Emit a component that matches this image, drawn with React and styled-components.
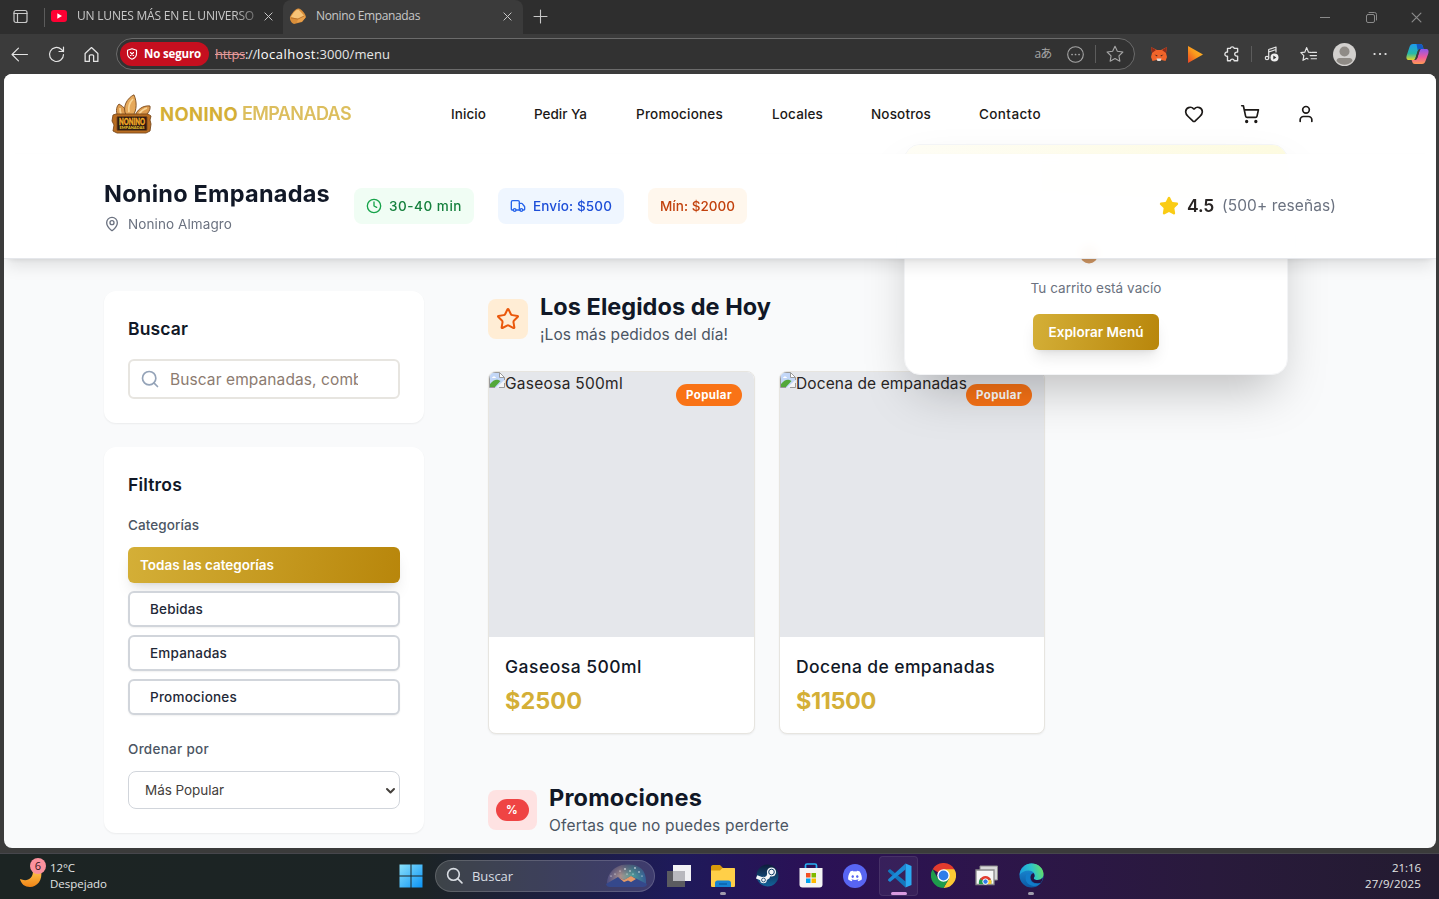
import React, { useLayoutEffect, useRef, useState } from "react";
import styled, { createGlobalStyle, css } from "styled-components";
import { Clock, Heart, MapPin, Search, ShoppingCart, Star, Truck, User } from "lucide-react";
import { FaDiscord } from "react-icons/fa6";

const uiFont = `Inter, "Liberation Sans", sans-serif`;
const systemFont = `"Open Sans", "Noto Sans", "Noto Sans CJK JP", sans-serif`;

const GlobalStyle = createGlobalStyle`
  *, *::before, *::after { box-sizing: border-box; }
  body { margin: 0; background: #3b3b3b; font-family: ${uiFont}; color: #292524; overflow: hidden; }
  h1, h2, h3, p { margin: 0; }
  button, input, select { font-family: inherit; margin: 0; }
`;

const FitSpan = styled.span`
  display: inline-block;
  white-space: nowrap;
  flex: none;
`;

/* Tracks a label so that it takes the given width in any installed font. */
function Fit({ w, children }) {
  const ref = useRef(null);
  const [spacing, setSpacing] = useState(0);
  useLayoutEffect(() => {
    const natural = ref.current.getBoundingClientRect().width;
    setSpacing((w - natural) / String(children).length);
  }, [w, children]);
  return (
    <FitSpan ref={ref} style={{ letterSpacing: `${spacing}px` }}>
      {children}
    </FitSpan>
  );
}

/* ---------- Browser window ---------- */

const Desktop = styled.div`
  width: 1439px;
  height: 899px;
  display: flex;
  flex-direction: column;
  background: #3b3b3b;
  overflow: hidden;
`;

const TabStrip = styled.div`
  height: 34px;
  flex: none;
  display: flex;
  background: #2e2e2e;
  color: #c8c8c8;
  font: 12px/32px ${systemFont};
`;

const Slot = styled.div`
  width: ${(p) => p.$w}px;
  height: ${(p) => p.$h || 32}px;
  flex: none;
  display: flex;
  align-items: center;
  justify-content: center;
  color: ${(p) => p.$color || "inherit"};
`;

const Spacer = styled.div`
  flex: 1;
`;

const Divider = styled.i`
  width: 1px;
  height: ${(p) => p.$h || 19}px;
  flex: none;
  align-self: center;
  background: #5c5c5c;
`;

const Tab = styled.div`
  width: ${(p) => p.$w}px;
  height: 34px;
  flex: none;
  display: flex;
  align-items: center;
  padding: 0 7px 2px 6px;
  ${(p) => p.$active && css`background: #3b3b3b; border-radius: 8px 8px 0 0;`}
`;

const TabTitle = styled.div`
  flex: 1;
  margin-left: ${(p) => (p.$fade ? 10 : 9)}px;
  overflow: hidden;
  ${(p) => p.$fade && css`mask-image: linear-gradient(90deg, #000 86%, rgba(0, 0, 0, 0.25));`}
`;

const Toolbar = styled.div`
  height: 40px;
  flex: none;
  display: flex;
  align-items: center;
  color: #e4e4e4;
`;

const AddressBar = styled.div`
  width: 1019px;
  height: 32px;
  margin-left: 6px;
  flex: none;
  display: flex;
  align-items: center;
  padding-left: 3px;
  border: 1px solid #6b6b6b;
  border-radius: 16px;
  background: #323232;
  color: #a6a6a6;
  font: 13px/30px ${systemFont};
`;

const UnsafeChip = styled.div`
  width: 89px;
  height: 24px;
  display: flex;
  align-items: center;
  gap: 6px;
  padding-left: 6px;
  border-radius: 12px;
  background: #c50f1f;
  color: #fff;
  font: 700 11.5px/24px ${systemFont};
`;

const Url = styled.div`
  display: flex;
  margin-left: 6px;
  color: #e6e6e6;
  s, s span { color: #e59a9a; text-decoration: line-through; }
  b { font-weight: 400; color: #fff; }
`;

const Translate = styled.div`
  font-size: 12px;
`;

const Page = styled.div`
  position: relative;
  width: 1432px;
  height: 774px;
  margin-left: 4px;
  flex: none;
  overflow: hidden;
  border-radius: 8px;
  background: #f9fafb;
`;

/* ---------- Site header ---------- */

const SiteHeader = styled.header`
  height: 80px;
  display: flex;
  align-items: center;
  padding: 0 120px 0 108px;
  background: #fff;
`;

const Brand = styled.div`
  width: 339px;
  display: flex;
  align-items: center;
  gap: 8px;
  flex: none;
`;

const BrandName = styled.div`
  display: flex;
  gap: 4px;
  font-size: 18.5px;
  line-height: 28px;
  color: #d4af37;
  b { font-weight: 700; }
`;

const BrandSuffix = styled.span`
  font-size: 18px;
  font-weight: 600;
  opacity: 0.8;
`;

const Nav = styled.nav`
  display: flex;
  gap: 48px;
  font-size: 13.5px;
  font-weight: 450;
  line-height: 20px;
  color: #1c1917;
`;

const HeaderActions = styled.div`
  display: flex;
  gap: 36px;
  margin-left: auto;
  color: #1c1917;
`;

/* ---------- Store banner ---------- */

const Banner = styled.section`
  position: relative;
  z-index: 2;
  height: 105px;
  display: flex;
  align-items: center;
  padding: 0 100px;
  border-bottom: 1px solid #e5e7eb;
  background: rgba(255, 255, 255, 0.95);
  backdrop-filter: blur(6px);
  box-shadow: 0 10px 15px -3px rgba(0, 0, 0, 0.1), 0 4px 6px -4px rgba(0, 0, 0, 0.1);
`;

const StoreInfo = styled.div`
  width: 250px;
  display: flex;
  flex-direction: column;
  gap: 4px;
`;

const Title = styled.h2`
  font-size: 23.5px;
  font-weight: 650;
  line-height: 32px;
  color: #111827;
`;

const Place = styled.p`
  display: flex;
  align-items: center;
  gap: 8px;
  font-size: 13.5px;
  line-height: 20px;
  color: #6b7280;
`;

const Pills = styled.div`
  display: flex;
  gap: 24px;
`;

const pillTones = {
  green: ["#f0fdf4", "#15803d", "#16a34a"],
  blue: ["#eff6ff", "#1d4ed8", "#2563eb"],
  orange: ["#fff7ed", "#c2410c", "#c2410c"],
};

const Pill = styled.div`
  height: 36px;
  display: flex;
  align-items: center;
  gap: 7px;
  padding: 0 12px;
  border-radius: 8px;
  background: ${(p) => pillTones[p.$tone][0]};
  color: ${(p) => pillTones[p.$tone][1]};
  font-size: 13.5px;
  font-weight: 450;
  svg { color: ${(p) => pillTones[p.$tone][2]}; }
`;

const Rating = styled.div`
  display: flex;
  align-items: center;
  gap: 8px;
  margin-left: auto;
  color: #6b7280;
  font-size: 15.5px;
  line-height: 24px;
  padding-bottom: 1px;
  b { font-size: 17.5px; font-weight: 600; color: #292524; }
`;

/* ---------- Cart drop-down ---------- */

const CartMenu = styled.aside`
  position: absolute;
  z-index: 1;
  left: 900px;
  top: 70px;
  width: 384px;
  height: 231px;
  display: flex;
  flex-direction: column;
  align-items: center;
  border: 1px solid #f3f4f6;
  border-radius: 16px;
  background: #fff;
  box-shadow: 0 25px 50px -12px rgba(0, 0, 0, 0.25);
  overflow: hidden;
`;

const CartHead = styled.div`
  width: 100%;
  height: 56px;
  background: linear-gradient(90deg, #fefdf5, #fdfbe0);
`;

const CartPicture = styled.svg`
  margin: 36px 15px 14px 0;
  flex: none;
`;

const CartText = styled.p`
  margin-bottom: 16px;
  font-size: 13.5px;
  line-height: 20px;
  color: #6b7280;
`;

const gold = css`
  border: 0;
  border-radius: 6px;
  background: linear-gradient(100deg, #d4af37, #b8860b);
  color: #fff;
  font-weight: 600;
  font-size: 13.5px;
  box-shadow: 0 10px 15px -3px rgba(0, 0, 0, 0.1), 0 4px 6px -4px rgba(0, 0, 0, 0.1);
`;

const GoldButton = styled.button`
  ${gold}
  width: 126px;
  height: 36px;
  padding: 0;
`;

/* ---------- Main area ---------- */

const Main = styled.main`
  display: flex;
  gap: 64px;
  padding: 32px 100px 0;
`;

const Sidebar = styled.aside`
  width: 320px;
  flex: none;
  display: flex;
  flex-direction: column;
  gap: 24px;
`;

const Panel = styled.section`
  padding: 24px;
  border-radius: 12px;
  background: #fff;
  box-shadow: 0 1px 2px rgba(0, 0, 0, 0.06);
`;

const PanelTitle = styled.h3`
  margin-bottom: 16px;
  font-size: 17.5px;
  font-weight: 600;
  line-height: 28px;
  color: #111827;
`;

const SearchField = styled.div`
  height: 40px;
  display: flex;
  align-items: center;
  gap: 10px;
  padding: 0 40px 0 10px;
  border: 2px solid #e7e5e0;
  border-radius: 6px;
  color: #94a3b8;
`;

const SearchText = styled.div`
  width: 188px;
  height: 26px;
  overflow: hidden;
  font-size: 15.5px;
  line-height: 27px;
  color: #8c7b70;
`;

const FieldLabel = styled.div`
  margin-bottom: 12px;
  font-size: 13.5px;
  font-weight: 450;
  line-height: 20px;
  color: #4b5563;
`;

const Options = styled.div`
  display: flex;
  flex-direction: column;
  gap: 8px;
  margin-bottom: 24px;
`;

const Option = styled.button`
  height: 36px;
  padding: 0 20px;
  border: 2px solid #d1d5db;
  border-radius: 6px;
  background: #fff;
  color: #1f2937;
  font-size: 13.5px;
  font-weight: 450;
  text-align: left;
  box-shadow: 0 1px 2px rgba(0, 0, 0, 0.06);
  ${(p) => p.$active && css`${gold} padding: 0 12px;`}
`;

const SelectBox = styled.div`
  height: 38px;
  display: flex;
  align-items: center;
  justify-content: space-between;
  padding: 0 3px 0 16px;
  border: 1px solid #d1d5db;
  border-radius: 8px;
  font-size: 13.5px;
  color: #44403c;
`;

const Content = styled.div`
  flex: 1;
`;

const SectionHead = styled.div`
  display: flex;
  align-items: center;
  gap: 12px;
  margin-bottom: 24px;
`;

const SectionIcon = styled.div`
  width: ${(p) => p.$w}px;
  height: 40px;
  display: flex;
  align-items: center;
  justify-content: center;
  border-radius: 8px;
  background: ${(p) => p.$bg};
  color: #ea580c;
`;

const Subtitle = styled.p`
  font-size: 15.5px;
  line-height: 24px;
  color: #4b5563;
`;

const Badge = styled.span`
  height: 22px;
  display: inline-flex;
  align-items: center;
  padding: 0 10px;
  border-radius: 11px;
  background: ${(p) => p.$bg};
  color: #fff;
  font-size: 11.5px;
  font-weight: 700;
`;

const Cards = styled.div`
  display: flex;
  gap: 24px;
  margin-bottom: 48px;
`;

const Card = styled.article`
  width: ${(p) => p.$w}px;
  overflow: hidden;
  border: 1px solid #e7e5e0;
  border-radius: 8px;
  background: #fff;
  box-shadow: 0 1px 2px rgba(0, 0, 0, 0.06);
`;

const CardMedia = styled.div`
  height: 265px;
  position: relative;
  display: flex;
  align-items: flex-start;
  background: #e5e7eb;
  font-size: 15.5px;
  line-height: 24px;
  ${Badge} { position: absolute; top: 12px; right: 12px; }
`;

const CardBody = styled.div`
  display: flex;
  flex-direction: column;
  gap: 4px;
  padding: 16px;
`;

const CardTitle = styled.h3`
  font-size: 17.5px;
  font-weight: 550;
  line-height: 28px;
  color: #111827;
`;

const Price = styled.div`
  font-size: 23.5px;
  font-weight: 700;
  line-height: 32px;
  color: #d4af37;
`;

/* ---------- Taskbar ---------- */

const Taskbar = styled.footer`
  height: 46px;
  margin-top: 5px;
  padding-bottom: 2px;
  flex: none;
  display: flex;
  align-items: center;
  background: linear-gradient(90deg, #1c2423 0%, #1c2425 29%, #1c1d48 41%, #1e1a5a 47%, #2a1156 56%, #2d154b 68%, #291a3c 84%, #231b30 100%);
  border-top: 1px solid #46464c;
  color: #fff;
  font: 11.5px/16px ${systemFont};
`;

const Weather = styled.div`
  width: 389px;
  display: flex;
  align-items: center;
  padding-left: 18px;
  gap: 4px;
  svg { margin-bottom: 5px; }
`;

const Lines = styled.div`
  display: flex;
  flex-direction: column;
  align-items: ${(p) => p.$align || "flex-start"};
  color: #e2e4e4;
`;

const TaskSearch = styled.div`
  width: 220px;
  height: 32px;
  display: flex;
  align-items: center;
  justify-content: space-between;
  margin: 0 2px;
  padding: 0 7px 0 10px;
  border: 1px solid rgba(255, 255, 255, 0.16);
  border-radius: 16px;
  background: rgba(255, 255, 255, 0.15);
  color: #d9dde3;
  font-size: 13px;
`;

const Hint = styled.div`
  display: flex;
  align-items: center;
  gap: 9px;
`;

const TaskButton = styled.div`
  width: 44px;
  height: 43px;
  flex: none;
  position: relative;
  display: flex;
  align-items: center;
  justify-content: center;
  &::before {
    content: "";
    position: absolute;
    display: ${(p) => (p.$focus ? "block" : "none")};
    inset: 2px 3px 1px 2px;
    border: 1px solid rgba(255, 255, 255, 0.08);
    border-radius: 4px;
    background: rgba(255, 255, 255, 0.06);
  }
  &::after {
    content: "";
    position: absolute;
    display: ${(p) => (p.$focus || p.$open ? "block" : "none")};
    bottom: 2px;
    width: ${(p) => (p.$focus ? 16 : 6)}px;
    height: 3px;
    border-radius: 2px;
    background: ${(p) => (p.$focus ? "#d99be0" : "#a09cac")};
  }
  svg { position: relative; }
`;

const TrayTime = styled.div`
  margin-left: auto;
  padding-right: 18px;
`;

/* ---------- Drawings ---------- */

const Line = ({ size = 16, box = 16, sw = 1.1, children, ...rest }) => (
  <svg width={size} height={size} viewBox={`0 0 ${box} ${box}`} fill="none" stroke="currentColor" strokeWidth={sw} strokeLinecap="round" strokeLinejoin="round" {...rest}>
    {children}
  </svg>
);

const CloseIcon = ({ size = 9 }) => (
  <Line size={size} box={10}><path d="M1 1l8 8M9 1l-8 8" /></Line>
);

const EmpanadaIcon = () => (
  <svg width="18" height="18" viewBox="0 0 18 18">
    <path d="M1 10C3 6 7 1 9.500 1.500c3 .5 7 5 7.500 8.500l-4 5-8 2c-2.500-1-4.500-4-4-7z" fill="#d98e3a" />
    <path d="M2 10c2-4 5-7.500 7.500-7.500L15.500 9 9 12z" fill="#f6c377" />
    <path d="M9 12l6.500-3 1 1.500-3.500 4-5 1z" fill="#e9a04a" />
    <path d="M2 11l7 1 6-3" stroke="#b36c26" strokeWidth=".8" fill="none" />
  </svg>
);

const LogoArt = () => (
  <svg width="40" height="40" viewBox="0 0 40 40" overflow="visible">
    <g stroke="#7b4a1c" strokeWidth=".9">
      <path d="M6 23C3 16 5 12 7 10c5 3 9 7 10 13z" fill="#dd9c50" />
      <path d="M23 23c1-7 8-12 15-11 1 5-4 10-9 12z" fill="#dd9c50" />
      <path d="M14 21C10 13 15 4 22 .8c3 7 3 15-1 21z" fill="#e6a95b" />
      <path d="M17 18c-1-5 1-10 4-13M9 20c-1-2-1-4-1-6M27 20c2-3 5-5 8-6" fill="none" stroke="#f8d596" strokeWidth="1.700" />
      <path d="M1 21l3-1h32l3 2-1 4 1 4-1 7-4 2H5l-4-2 1-6-2-4z" fill="#b86c20" />
      <rect x="5" y="22.500" width="30" height="14" rx="1" fill="#301b12" />
    </g>
    <text x="20" y="30.500" textAnchor="middle" textLength="26" lengthAdjust="spacingAndGlyphs" fontFamily="Lato, sans-serif" fontWeight="900" fontSize="8.500" fill="#f79a1c" stroke="#ffd23b" strokeWidth=".3">NONINO</text>
    <text x="20" y="35.300" textAnchor="middle" textLength="25" lengthAdjust="spacingAndGlyphs" fontFamily="Lato, sans-serif" fontWeight="900" fontSize="4" fill="#e6c22d">EMPANADAS</text>
  </svg>
);

const BrokenImage = () => (
  <svg width="16" height="16" viewBox="0 0 16 16">
    <path d="M.5 .5h10l5 5v10H.5z" fill="#c3d7f7" />
    <path d="M10.500.5v5h5z" fill="#fff" />
    <path d="M3 6c.5-2 3.500-2 4 0z" fill="#fff" />
    <path d="M1 15v-3c3-4 6-5 8.500-4l2 1L6 15z" fill="#52a83a" />
    <path d="M15.500 8v7.500H7z" fill="#f3f4f6" />
    <path d="M.5 15.500V.5h10l5 5V8M10.500.5v5h5M.5 15.500H6M15.500 11v4.500H10" fill="none" stroke="#9a9a9a" />
  </svg>
);

const WindowsLogo = () => (
  <svg width="24" height="24" viewBox="0 0 24 24">
    <defs><linearGradient id="win" x1="0" y1="0" x2="1" y2="1"><stop stopColor="#8be1fb" /><stop offset="1" stopColor="#0a93f5" /></linearGradient></defs>
    <path fill="url(#win)" d="M.5.5H11.500v11H.5zM12.500.5h11v11h-11zM.5 12.500h11v11H.5zM12.500 12.500h11v11h-11z" />
  </svg>
);

const SearchArt = () => (
  <svg width="41" height="25" viewBox="0 0 41 25">
    <defs>
      <linearGradient id="sky" x1="0" x2="1"><stop stopColor="#4d4c7f" /><stop offset=".35" stopColor="#a68f8c" /><stop offset=".65" stopColor="#4d9c98" /><stop offset="1" stopColor="#345b94" /></linearGradient>
      <linearGradient id="skyFade" x1="0" y1="0" x2="0" y2="1"><stop stopColor="#fff" stopOpacity=".2" /><stop offset=".5" stopColor="#fff" /></linearGradient>
      <mask id="skyMask"><path d="M0 0h41v25H0z" fill="url(#skyFade)" /></mask>
    </defs>
    <path d="M1 22C0 12 8 2 20 1.500 33 1 41 6 40 22z" fill="url(#sky)" mask="url(#skyMask)" />
    <path d="M0 21l12-7 6 3 7-4 16 8c0 2-2 3-4 3H4c-2 0-4-1-4-3z" fill="#35488b" />
    <path d="M12 14l6 3 7-4 5 3-5 3-3-1.500-4 1.500z" fill="#e59a68" />
    <g fill="#fff"><circle cx="19" cy="6" r=".8" /><circle cx="24" cy="8" r=".7" /><circle cx="14" cy="8" r=".6" /><circle cx="29" cy="5" r=".8" /><circle cx="33" cy="9" r=".7" /><circle cx="9" cy="11" r=".6" /><circle cx="27" cy="11" r=".6" /><circle cx="21" cy="11" r=".6" /><circle cx="36" cy="13" r=".6" /><circle cx="5" cy="13" r=".6" /></g>
  </svg>
);

const TaskViewIcon = () => (
  <svg width="24" height="22" viewBox="0 0 24 22">
    <path d="M6 0h18v16H6z" fill="#f2f2f4" />
    <path d="M0 6h18v16H0z" fill="#5b5b60" />
    <path d="M6 6h12v10H6z" fill="#b9b9be" />
  </svg>
);

const FolderIcon = () => (
  <svg width="26" height="24" viewBox="0 0 26 24">
    <path d="M1 3c0-1 .5-2 2-2h7l3 3h10c1 0 2 1 2 2v5H1z" fill="#d99a0b" />
    <path d="M1 6.500h9L12.500 4H24c.6 0 1 .4 1 1v16.500c0 1-.5 1.500-1.500 1.500h-21C1.500 23 1 22.500 1 21.500z" fill="#ffcf48" />
    <path d="M5 23v-4c0-1.500 1-2.500 2.500-2.500h11c1.500 0 2.500 1 2.500 2.500v4z" fill="#1683d3" />
    <path d="M9 20h8" stroke="#0c61a8" strokeWidth="1.500" />
  </svg>
);

const SteamIcon = () => (
  <svg width="23" height="23" viewBox="0 0 23 23">
    <defs><linearGradient id="steam" x1="0" y1="0" x2="0" y2="1"><stop stopColor="#0e1c3a" /><stop offset="1" stopColor="#12639b" /></linearGradient></defs>
    <circle cx="11.500" cy="11.500" r="11" fill="url(#steam)" />
    <path d="M.6 12.800l7.400 3 4-2.800 1.500-4" fill="none" stroke="#f3f6f9" strokeWidth="3.600" />
    <circle cx="7.500" cy="16" r="3.300" fill="#f3f6f9" />
    <circle cx="15.500" cy="8" r="4.600" fill="#f3f6f9" />
    <circle cx="15.500" cy="8" r="2.800" fill="#f3f6f9" stroke="#0d3c66" />
    <circle cx="7.500" cy="16" r="1.900" fill="none" stroke="#0d3c66" strokeWidth=".8" />
  </svg>
);

const StoreIcon = () => (
  <svg width="24" height="25" viewBox="0 0 24 25">
    <path d="M6.500 6V2.500c0-1 .5-1.500 1.500-1.500h8c1 0 1.500.5 1.500 1.500V6" fill="none" stroke="#27b1f1" strokeWidth="1.700" />
    <path d="M.5 5h23v16.500c0 2-1 3-3 3h-17c-2 0-3-1-3-3z" fill="#f4f4f4" />
    <path d="M7 10h4.500v4.500H7z" fill="#f25022" /><path d="M12.500 10H17v4.500h-4.500z" fill="#7fba00" /><path d="M7 15.500h4.500V20H7z" fill="#00a4ef" /><path d="M12.500 15.500H17V20h-4.500z" fill="#ffb900" />
  </svg>
);

const CodeIcon = () => (
  <svg width="25" height="25" viewBox="0 0 25 25">
    <path d="M1 7.500L3 6l15.500 12.500v6L1.200 8.800z" fill="#1277bd" />
    <path d="M1 17.500L3 19 18.500 6.500v-6L1.200 16.200z" fill="#1a8ad6" />
    <path d="M18.500.5l6 2.500v19l-6 2.500z" fill="#2aa9f2" />
  </svg>
);

const ChromeIcon = () => (
  <svg width="25" height="25" viewBox="0 0 24 24">
    <path d="M12 12L1.600 6A12 12 0 0 1 22.400 6z" fill="#e33b2e" />
    <path d="M12 6h10.400A12 12 0 0 1 12 24l5.200-9z" fill="#fcc934" />
    <path d="M6.800 15L1.600 6A12 12 0 0 0 12 24l5.200-9z" fill="#1e9c4c" />
    <circle cx="12" cy="12" r="6" fill="#fff" /><circle cx="12" cy="12" r="4.700" fill="#2f7de9" />
  </svg>
);

const RemoteIcon = () => (
  <svg width="24" height="23" viewBox="0 0 24 23">
    <path d="M5 2h17.500v14H5z" fill="#d8d8d8" stroke="#8b8b8b" />
    <path d="M1 6h18v14.500H1z" fill="#f7f7f7" stroke="#8b8b8b" strokeWidth="1.300" />
    <path d="M4 20a6.500 6.500 0 0 1 1.800-6h9a6.500 6.500 0 0 1 1.400 6z" fill="#1e9c4c" />
    <path d="M5 15.500a6 6 0 0 1 11 0l-5.500 1z" fill="#e33b2e" /><path d="M12 16h4.200a7 7 0 0 1 0 4H12z" fill="#fcc934" />
    <circle cx="10.500" cy="17.600" r="2.700" fill="#2f7de9" stroke="#fff" />
  </svg>
);

const EdgeIcon = () => (
  <svg width="25" height="25" viewBox="0 0 25 25">
    <defs>
      <linearGradient id="edgeTop" x1="0" y1=".6" x2="1" y2=".4"><stop stopColor="#1a9ce0" /><stop offset=".55" stopColor="#2ec5c9" /><stop offset="1" stopColor="#67e063" /></linearGradient>
      <linearGradient id="edgeLow" x1="0" y1="0" x2="0" y2="1"><stop stopColor="#1d93dc" /><stop offset="1" stopColor="#0c59a4" /></linearGradient>
    </defs>
    <circle cx="12.500" cy="12.500" r="12" fill="url(#edgeLow)" />
    <path d="M.6 12C1 5 6.500.5 12.500.5c7 0 12 5 12 10.500 0 4-3 6-6 6-3.500 0-4-1.500-3.500-2.500 1-1 1-2.500.3-4C13 6 4 6.500.6 12z" fill="url(#edgeTop)" />
    <path d="M15 14.500c-.5 1 0 2.500 3.500 2.500 2 0 4-.8 5.200-2.500-.2 2.500-1 4-2.200 5.500-3 1-9 .5-10-5-.3-2.500 1-4.500 3-5 1 1.500 1.500 3 .5 4.500z" fill="#251345" />
    <path d="M8 10.500c-3 4-1.500 11.500 6.500 12.500 3 .2 5.500-1 7-3-8 2.500-12.500-3-9.500-9z" fill="#127cca" />
  </svg>
);

const WeatherIcon = () => (
  <svg width="28" height="32" viewBox="0 0 28 32">
    <defs><linearGradient id="moon" x1="0" y1="0" x2="0" y2="1"><stop stopColor="#ffc24c" /><stop offset="1" stopColor="#f08416" /></linearGradient></defs>
    <path d="M23 14c2 9-4 16-11 16-5 0-9-3-10-8 7 3 13 0 13-8z" fill="url(#moon)" />
    <circle cx="20" cy="9" r="8" fill="#fb919d" />
    <text x="20" y="13" textAnchor="middle" fontSize="11" fontFamily="Open Sans, sans-serif" fill="#30171b">6</text>
  </svg>
);

const FoxIcon = () => (
  <svg width="18" height="16" viewBox="0 0 18 16">
    <path d="M1 1l6 3h4l6-3-1 6 1 4-1.500 4-4-1-1.500 1H8l-1.500-1-4 1L1 11l1-4z" fill="#f0642a" />
    <path d="M1 1l5 3-4 3zM17 1l-5 3 4 3z" fill="#8e2c1b" />
    <path d="M6.500 12.500h5L10.500 15h-3z" fill="#dcdcdc" /><path d="M4.500 8.500l3 1-.5 1zM13.500 8.500l-3 1 .5 1z" fill="#32201d" />
  </svg>
);

const PlayIcon = () => (
  <svg width="15" height="17" viewBox="0 0 15 17">
    <defs><linearGradient id="play" x1="0" y1="1" x2="1" y2="0"><stop stopColor="#ea4326" /><stop offset=".5" stopColor="#fb9a1c" /><stop offset="1" stopColor="#fbc02d" /></linearGradient></defs>
    <path d="M0 0l15 8.500L0 17z" fill="url(#play)" />
  </svg>
);

const AvatarIcon = () => (
  <svg width="23" height="23" viewBox="0 0 23 23">
    <circle cx="11.500" cy="11.500" r="11.500" fill="#d2d0ce" />
    <circle cx="11.500" cy="8.500" r="5" fill="#8f8b86" />
    <path d="M3.500 18c0-2 1.500-3 3-3h10c1.500 0 3 1 3 3a10.500 10.500 0 0 1-16 0z" fill="#8f8b86" />
  </svg>
);

const CopilotIcon = () => (
  <svg width="23" height="22" viewBox="0 0 23 22">
    <defs>
      <linearGradient id="coA" x1="0" y1="0" x2="0" y2="1"><stop stopColor="#1d9bf0" /><stop offset=".6" stopColor="#27b9a5" /><stop offset="1" stopColor="#e3d428" /></linearGradient>
      <linearGradient id="coB" x1="0" y1="0" x2="0" y2="1"><stop stopColor="#8a57ee" /><stop offset=".55" stopColor="#ee5a9c" /><stop offset="1" stopColor="#ff9a55" /></linearGradient>
    </defs>
    <path d="M7 1h7c2 0 2.500 1 3 3l.5 2H14c-1.500 0-2 1-2.500 2.500L9.500 15c-.5 1.500-1 2-2.500 2H3c-2.500 0-3-2-2.300-4.500L3.500 4C4.200 2 5 1 7 1z" fill="url(#coA)" />
    <path d="M16 21H9c-2 0-2.500-1-3-3l-.5-1H9c1.500 0 2-1 2.500-2.500L13.500 8c.5-1.500 1-2 2.500-2h4c2.500 0 3 2 2.300 4.500L19.500 18c-.7 2-1.500 3-3.500 3z" fill="url(#coB)" />
    <path d="M10.500 1H14c2 0 2.500 1 3 3l.5 2H14c-1 0-2 .5-2.300 1.500z" fill="#1557c2" />
    <path d="M12 7.500L9.500 15c-.3 1-.6 1.500-1.200 1.800H9c1.500 0 2-1 2.500-2.500L13.500 8c.3-1 .6-1.500 1.200-1.800C13.200 6 12.500 6.500 12 7.500z" fill="#3b3b3b" />
  </svg>
);

/* ---------- Sections ---------- */

const BrowserTop = () => (
  <>
    <TabStrip>
      <Slot $w={40}>
        <Line size={15} box={15} sw={1.2}><rect x="1" y="1.500" width="13" height="12" rx="2" /><path d="M1 4.500h13M4.500 4.500v9" /></Line>
      </Slot>
      <Slot $w={4} />
      <Divider />
      <Tab $w={238}>
        <svg width="16" height="12" viewBox="0 0 16 12"><rect width="16" height="12" rx="3" fill="#ff0033" /><path d="M6.300 3.200L11 6 6.300 8.800z" fill="#fff" /></svg>
        <TabTitle $fade><Fit w={177}>UN LUNES MÁS EN EL UNIVERSO</Fit></TabTitle>
        <Slot $w={16}><CloseIcon /></Slot>
      </Tab>
      <Tab $w={240} $active>
        <EmpanadaIcon />
        <TabTitle><Fit w={104}>Nonino Empanadas</Fit></TabTitle>
        <Slot $w={18}><CloseIcon /></Slot>
      </Tab>
      <Slot $w={34}><Line size={15} box={15}><path d="M7.500 1v13M1 7.500h13" /></Line></Slot>
      <Spacer />
      <Slot $w={46} $color="#8a8a8a" $h={34}><Line size={10} box={10} sw={1}><path d="M0 5.500h10" /></Line></Slot>
      <Slot $w={46} $color="#8a8a8a" $h={34}><Line size={11} box={11} sw={1}><rect x=".5" y="2.500" width="8" height="8" rx="1.500" /><path d="M3 .5h5.500a2 2 0 0 1 2 2V8" /></Line></Slot>
      <Slot $w={45} $color="#8a8a8a" $h={34}><CloseIcon size={11} /></Slot>
    </TabStrip>
    <Toolbar>
      <Slot $w={39}><Line size={17}><path d="M15.500 8H1M7 2L1 8l6 6" /></Line></Slot>
      <Slot $w={34}><Line size={17} box={17} sw={1.2}><path d="M15.500 8.500a7 7 0 1 1-2.300-5.200L15.500 5.500M15.500 1v4.500H11" /></Line></Slot>
      <Slot $w={37}><Line size={17} sw={1.2}><path d="M2 7l6-5.500L14 7v7.500h-4V9.500c0-.8-.5-1.200-1.200-1.200H7.200C6.500 8.300 6 8.700 6 9.500v5H2z" /></Line></Slot>
      <AddressBar>
        <UnsafeChip>
          <Line size={12} box={12}><path d="M6 .8l4.500 1.500v3.500c0 2.500-1.500 4.300-4.500 5.500C3 10 1.500 8.300 1.500 5.800V2.300zM4.500 4.500l3 3M7.500 4.500l-3 3" /></Line>
          <Fit w={57}>No seguro</Fit>
        </UnsafeChip>
        <Url><s><Fit w={30}>https</Fit></s><Fit w={12}>://</Fit><b><Fit w={59}>localhost</Fit></b><Fit w={74}>:3000/menu</Fit></Url>
        <Spacer />
        <Slot $w={32}><Translate><Fit w={17}>aあ</Fit></Translate></Slot>
        <Slot $w={32}><Line size={17} box={17} sw={1.1}><circle cx="8.500" cy="8.500" r="7.800" /><path d="M5 8.500h.1M8.500 8.500h.1M12 8.500h.1" strokeWidth="1.700" /></Line></Slot>
        <Slot $w={4} />
        <Divider $h={18} />
        <Slot $w={38}><Line size={18} sw={1}><path d="M8 1.100l2.100 4.400 4.900.7-3.500 3.400.8 4.800L8 12.100l-4.300 2.300.8-4.800L1 6.200l4.900-.7z" /></Line></Slot>
      </AddressBar>
      <Slot $w={6} />
      <Slot $w={36}><FoxIcon /></Slot>
      <Slot $w={36}><PlayIcon /></Slot>
      <Slot $w={38}><Line size={18} sw={1.2}><path d="M4 3h2.500a1.800 1.800 0 0 1 3.500 0H13v3.300h-.8a1.800 1.800 0 1 0 0 3.600h.8V14h-3a1.800 1.800 0 0 0-3.500 0H4v-4a1.900 1.900 0 1 1 0-3.700z" /></Line></Slot>
      <Divider $h={16} />
      <Slot $w={40}>
        <Line size={16} sw={1.2}><circle cx="3" cy="12" r="1.700" /><path d="M4.700 12V3.500L12 1v5M4.700 6L12 3.500" /><circle cx="10.500" cy="11.500" r="4" fill="#eee" stroke="none" /><path d="M9.300 9.500l3 2-3 2z" fill="#333" stroke="none" /></Line>
      </Slot>
      <Slot $w={32}><Line size={17} sw={1.1}><path d="M10 6L8 5.800 6.300 1.500 4.500 5.800.8 6.200l2.800 2.900-.8 4.400 3.500-2 1.200.7M11 6h4.500M9.500 9h6M10.500 12h5" /></Line></Slot>
      <Slot $w={40}><AvatarIcon /></Slot>
      <Slot $w={32}><Line size={14} box={14} sw={2.2}><path d="M1.500 7h.1M7 7h.1M12.500 7h.1" /></Line></Slot>
      <Slot $w={43}><CopilotIcon /></Slot>
    </Toolbar>
  </>
);

const navItems = [
  { name: "Inicio", w: 35, slot: 35 },
  { name: "Pedir Ya", w: 53, slot: 53 },
  { name: "Promociones", w: 87, slot: 89 },
  { name: "Locales", w: 51, slot: 51 },
  { name: "Nosotros", w: 60, slot: 60 },
  { name: "Contacto", w: 62, slot: 62 },
];

const Product = ({ name, price, w, altW, nameW, priceW }) => (
  <Card $w={w}>
    <CardMedia>
      <BrokenImage />
      <Fit w={altW}>{name}</Fit>
      <Badge $bg="#f97316"><Fit w={46}>Popular</Fit></Badge>
    </CardMedia>
    <CardBody>
      <CardTitle><Fit w={nameW}>{name}</Fit></CardTitle>
      <Price><Fit w={priceW}>{price}</Fit></Price>
    </CardBody>
  </Card>
);

export default function App() {
  return (
    <Desktop>
      <GlobalStyle />
      <BrowserTop />
      <Page>
        <SiteHeader>
          <Brand>
            <LogoArt />
            <BrandName><b><Fit w={78}>NONINO</Fit></b><BrandSuffix><Fit w={109}>EMPANADAS</Fit></BrandSuffix></BrandName>
          </Brand>
          <Nav>
            {navItems.map(({ name, w, slot }) => (
              <Slot key={name} $w={slot} $h={20}><Fit w={w}>{name}</Fit></Slot>
            ))}
          </Nav>
          <HeaderActions><Heart size={20} /><ShoppingCart size={20} /><User size={20} /></HeaderActions>
        </SiteHeader>
        <CartMenu>
          <CartHead />
          <CartPicture width="30" height="27" viewBox="0 0 30 27"><circle cx="15" cy="17.500" r="9" fill="#cf9663" /></CartPicture>
          <CartText><Fit w={131}>Tu carrito está vacío</Fit></CartText>
          <GoldButton><Fit w={95}>Explorar Menú</Fit></GoldButton>
        </CartMenu>
        <Banner>
          <StoreInfo>
            <Title as="h1"><Fit w={226}>Nonino Empanadas</Fit></Title>
            <Place><MapPin size={16} /><Fit w={104}>Nonino Almagro</Fit></Place>
          </StoreInfo>
          <Pills>
            <Pill $tone="green"><Clock size={16} /><Fit w={73}>30-40 min</Fit></Pill>
            <Pill $tone="blue"><Truck size={16} /><Fit w={79}>Envío: $500</Fit></Pill>
            <Pill $tone="orange"><Fit w={75}>Mín: $2000</Fit></Pill>
          </Pills>
          <Rating>
            <Star size={20} color="#facc15" fill="#facc15" />
            <b><Fit w={27}>4.5</Fit></b>
            <Fit w={114}>(500+ reseñas)</Fit>
          </Rating>
        </Banner>
        <Main>
          <Sidebar>
            <Panel>
              <PanelTitle><Fit w={60}>Buscar</Fit></PanelTitle>
              <SearchField>
                <Search size={20} />
                <SearchText><Fit w={224}>Buscar empanadas, combos...</Fit></SearchText>
              </SearchField>
            </Panel>
            <Panel>
              <PanelTitle><Fit w={54}>Filtros</Fit></PanelTitle>
              <FieldLabel><Fit w={71}>Categorías</Fit></FieldLabel>
              <Options>
                <Option $active><Fit w={134}>Todas las categorías</Fit></Option>
                <Option><Fit w={53}>Bebidas</Fit></Option>
                <Option><Fit w={77}>Empanadas</Fit></Option>
                <Option><Fit w={87}>Promociones</Fit></Option>
              </Options>
              <FieldLabel><Fit w={81}>Ordenar por</Fit></FieldLabel>
              <SelectBox>
                <Fit w={79}>Más Popular</Fit>
                <Line size={11} box={11} sw={2}><path d="M2 4l3.500 3.500L9 4" /></Line>
              </SelectBox>
            </Panel>
          </Sidebar>
          <Content>
            <SectionHead>
              <SectionIcon $w={40} $bg="#ffedd5"><Star size={24} /></SectionIcon>
              <div>
                <Title><Fit w={231}>Los Elegidos de Hoy</Fit></Title>
                <Subtitle><Fit w={188}>¡Los más pedidos del día!</Fit></Subtitle>
              </div>
            </SectionHead>
            <Cards>
              <Product name="Gaseosa 500ml" price="$2500" w={267} altW={118} nameW={137} priceW={77} />
              <Product name="Docena de empanadas" price="$11500" w={266} altW={171} nameW={199} priceW={80} />
            </Cards>
            <SectionHead>
              <SectionIcon $w={49} $bg="#fee2e2"><Badge $bg="#ef4444"><Fit w={13}>%</Fit></Badge></SectionIcon>
              <div>
                <Title><Fit w={153}>Promociones</Fit></Title>
                <Subtitle><Fit w={240}>Ofertas que no puedes perderte</Fit></Subtitle>
              </div>
            </SectionHead>
          </Content>
        </Main>
      </Page>
      <Taskbar>
        <Weather>
          <WeatherIcon />
          <Lines><Fit w={25}>12°C</Fit><Fit w={57}>Despejado</Fit></Lines>
        </Weather>
        <TaskButton><WindowsLogo /></TaskButton>
        <TaskSearch>
          <Hint><Line size={17} sw={1.5}><circle cx="7" cy="7" r="5.500" /><path d="M11 11l4 4" /></Line><Fit w={41}>Buscar</Fit></Hint>
          <SearchArt />
        </TaskSearch>
        <TaskButton><TaskViewIcon /></TaskButton>
        <TaskButton $open><FolderIcon /></TaskButton>
        <TaskButton><SteamIcon /></TaskButton>
        <TaskButton><StoreIcon /></TaskButton>
        <TaskButton><svg width="24" height="24" viewBox="0 0 24 24"><circle cx="12" cy="12" r="12" fill="#5865f2" /><FaDiscord x="4.500" y="4.500" size={15} color="#fff" /></svg></TaskButton>
        <TaskButton $focus><CodeIcon /></TaskButton>
        <TaskButton><ChromeIcon /></TaskButton>
        <TaskButton><RemoteIcon /></TaskButton>
        <TaskButton $open><EdgeIcon /></TaskButton>
        <TrayTime><Lines $align="flex-end"><Fit w={29}>21:16</Fit><Fit w={56}>27/9/2025</Fit></Lines></TrayTime>
      </Taskbar>
    </Desktop>
  );
}
